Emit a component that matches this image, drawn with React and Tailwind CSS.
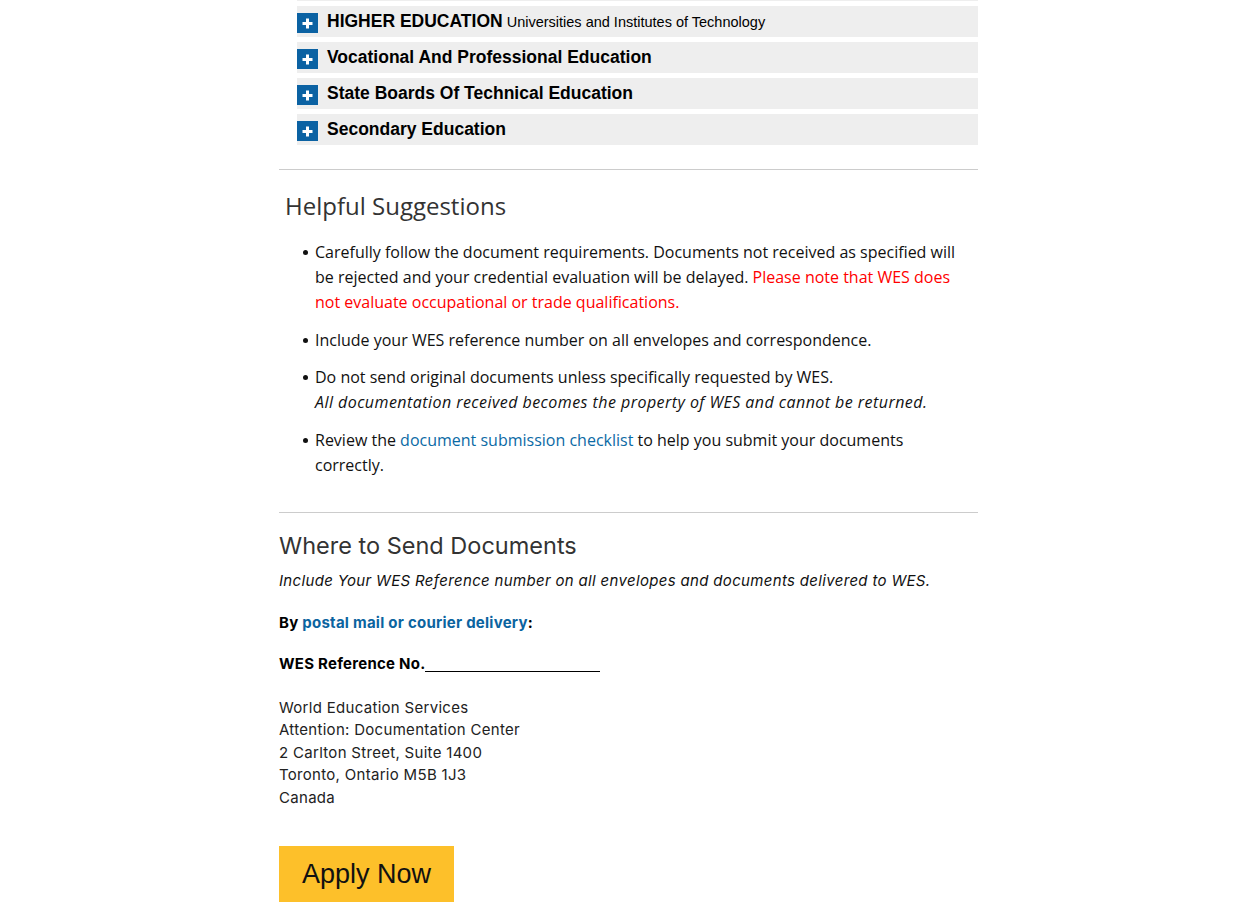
import React from "react";

const sections = [
  { title: "HIGHER EDUCATION", sub: "Universities and Institutes of Technology" },
  { title: "Vocational And Professional Education" },
  { title: "State Boards Of Technical Education" },
  { title: "Secondary Education" },
];

function PlusBox() {
  return (
    <span className="mt-[7px] flex h-[20px] w-[21px] shrink-0 items-center justify-center bg-[#0b62a3]">
      <svg width="11" height="11" viewBox="0 0 11 11">
        <rect x="4" y="0.5" width="3" height="10" fill="#fff" />
        <rect x="0.5" y="4" width="10" height="3" fill="#fff" />
      </svg>
    </span>
  );
}

function Bullet({ children }) {
  return (
    <li className="flex gap-[7px]">
      <span className="mt-[10px] h-[5px] w-[5px] shrink-0 rounded-full bg-[#111]" />
      <div className="w-[650px]">{children}</div>
    </li>
  );
}

export default function App() {
  const sans = { fontFamily: '"Open Sans", sans-serif' };
  const geo = { fontFamily: 'Inter, sans-serif' };
  return (
    <div className="min-h-[917px] bg-white">
      <div className="ml-[279px] w-[699px]">
        {/* expandable credential groups */}
        <div className="ml-[18px]" style={{ fontFamily: '"Liberation Sans", Arial, sans-serif' }}>
          <div className="h-[1px] bg-[#eeeeee]" />
          {sections.map((s) => (
            <div key={s.title} className="mt-[5px] flex h-[31px] items-start gap-[9px] bg-[#eeeeee]">
              <PlusBox />
              <div className="mt-[5px] leading-[20px] text-black">
                <span className="text-[17.5px] font-bold">{s.title}</span>
                {s.sub && <span className="text-[14.5px]"> {s.sub}</span>}
              </div>
            </div>
          ))}
        </div>

        <hr className="mt-[24px] border-0 border-t border-[#cccccc]" />

        {/* suggestions */}
        <div style={sans}>
          <h2 className="ml-[6px] mt-[20px] text-[24px] font-normal leading-[32px] text-[#333333]">
            Helpful Suggestions
          </h2>
          <ul className="ml-[24px] mt-[18px] flex flex-col gap-[12.5px] text-[16px] leading-[25px] text-[#111111]">
            <Bullet>
              Carefully follow the document requirements. Documents not received as specified will be rejected
              and your credential evaluation will be delayed.{" "}
              <span className="text-[#ff0000]">
                Please note that WES does not evaluate occupational or trade qualifications.
              </span>
            </Bullet>
            <Bullet>Include your WES reference number on all envelopes and correspondence.</Bullet>
            <Bullet>
              Do not send original documents unless specifically requested by WES.
              <br />
              <em className="tracking-[0.45px]">
                All documentation received becomes the property of WES and cannot be returned.
              </em>
            </Bullet>
            <Bullet>
              Review the <a className="text-[#0b6aa5]">document submission checklist</a> to help you submit your
              documents correctly.
            </Bullet>
          </ul>
        </div>

        <hr className="mt-[34px] border-0 border-t border-[#cccccc]" />

        {/* mailing instructions */}
        <div style={geo} className="text-[#1a1a1a]">
          <h2 className="mt-[19px] text-[23.5px] font-normal leading-[28px] text-[#333333]">
            Where to Send Documents
          </h2>
          <p className="mt-[10px] text-[15px] italic leading-[22px] tracking-[0.33px] text-[#111111]">
            Include Your WES Reference number on all envelopes and documents delivered to WES.
          </p>
          <p className="mt-[20px] text-[15px] font-bold leading-[22px] tracking-[0.25px] text-black">
            By <a className="text-[#0b64a0]">postal mail or courier delivery</a>:
          </p>
          <p className="mt-[19px] text-[15px] font-bold leading-[22px] tracking-[0.25px] text-black">
            WES Reference No.
            <span className="inline-block w-[175px] border-b border-black align-[-3px]" />
          </p>
          <div className="mt-[22px] text-[15px] leading-[22.5px] tracking-[0.3px] text-[#222222]">
            <div>World Education Services</div>
            <div>Attention: Documentation Center</div>
            <div>2 Carlton Street, Suite 1400</div>
            <div>Toronto, Ontario M5B 1J3</div>
            <div>Canada</div>
          </div>
          <button
            className="mt-[37px] flex h-[56px] w-[175px] items-center justify-center bg-[#fdc02a] text-[27px] text-[#111111]"
            style={{ fontFamily: '"Liberation Sans", Arial, sans-serif' }}
          >
            Apply Now
          </button>
        </div>
      </div>
    </div>
  );
}
